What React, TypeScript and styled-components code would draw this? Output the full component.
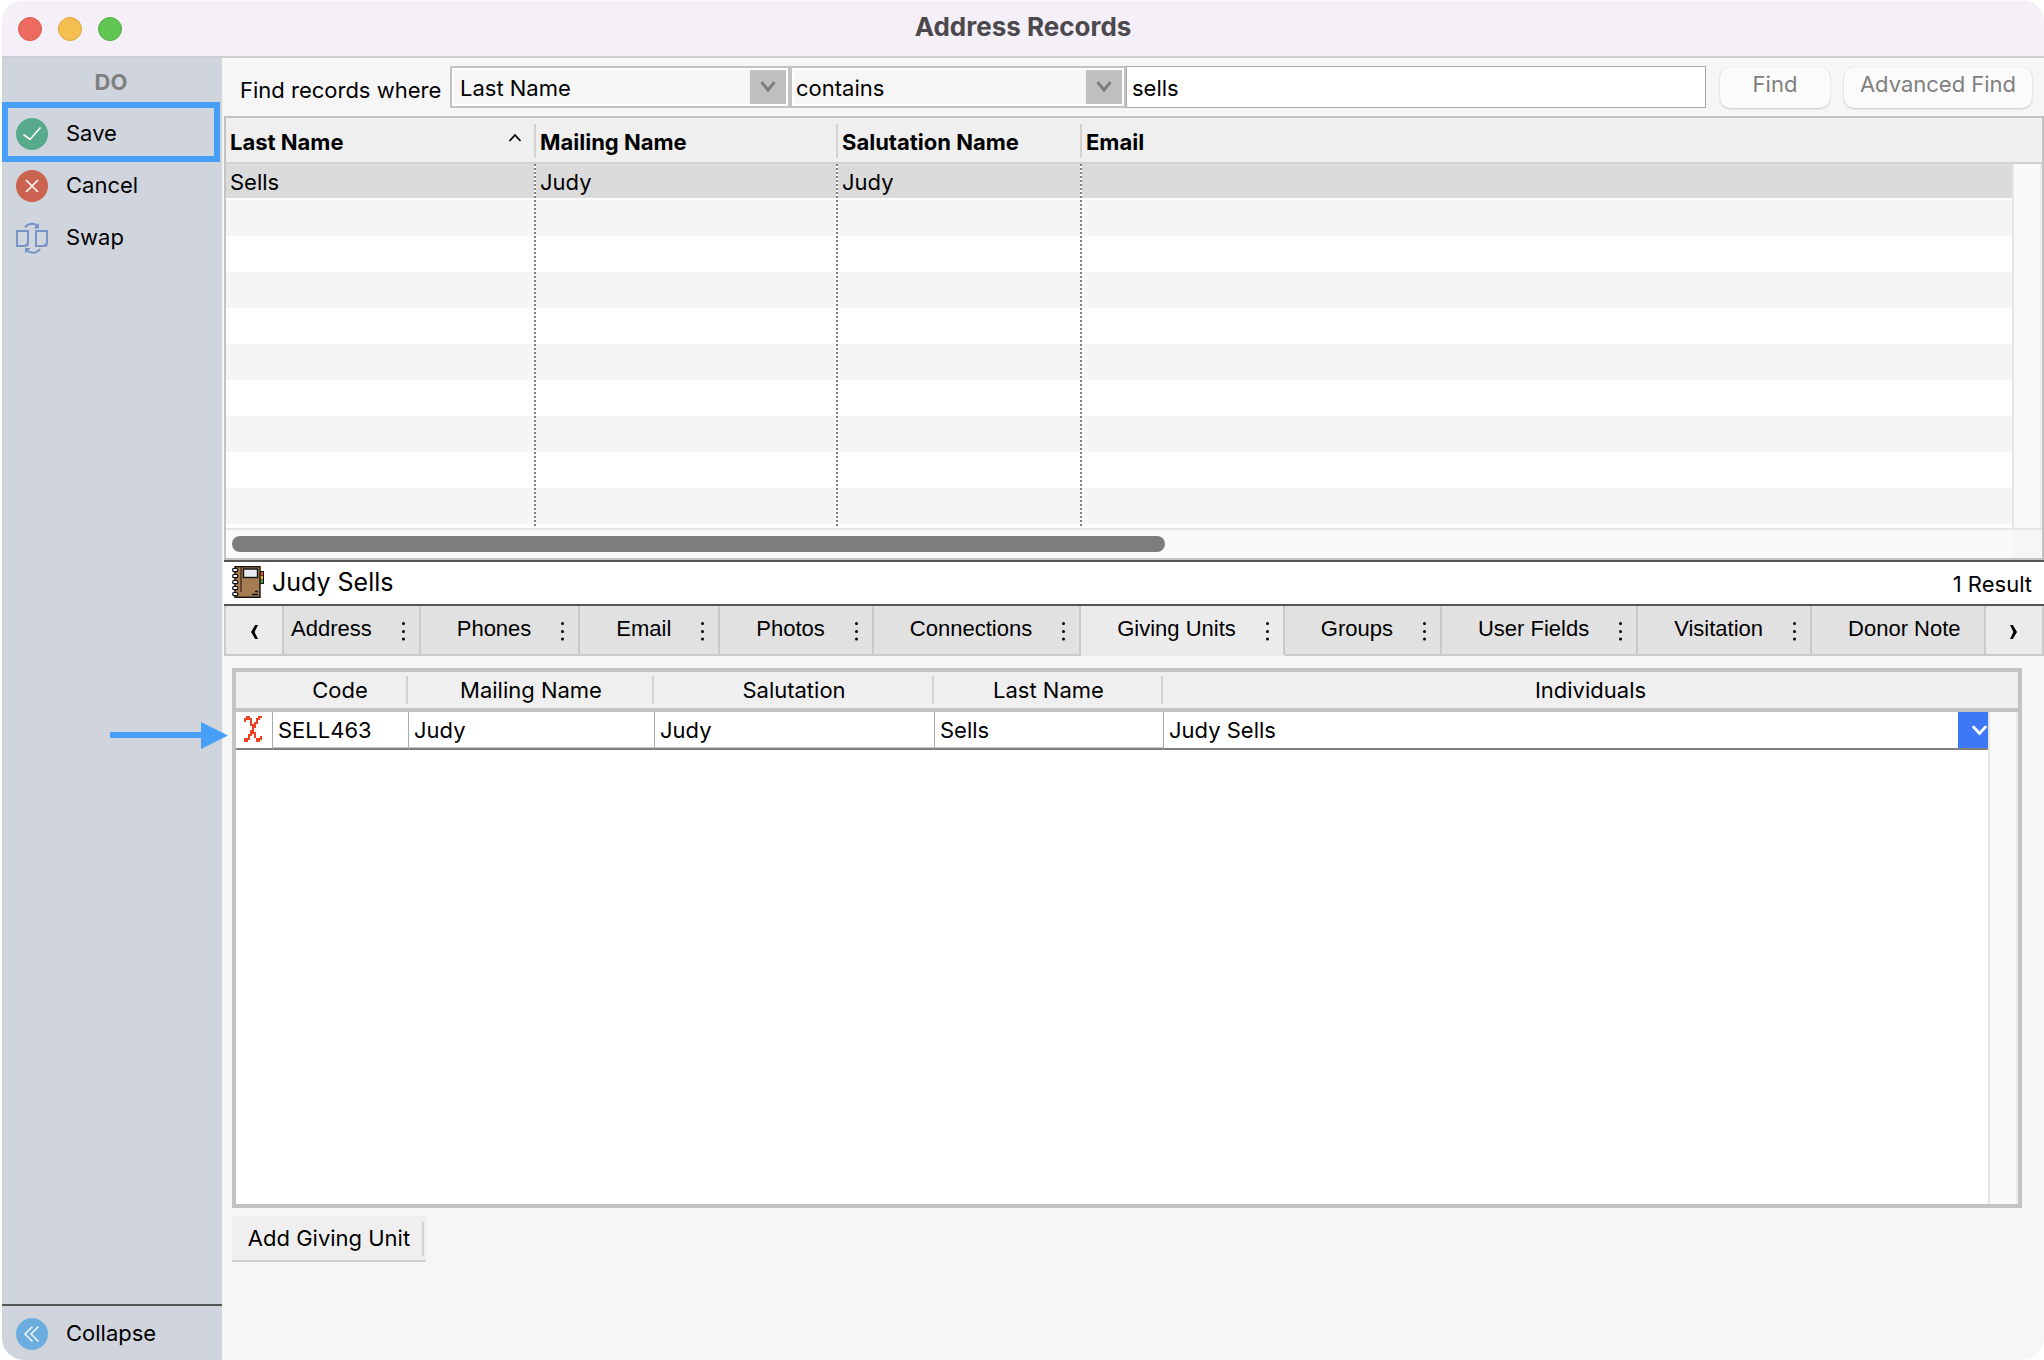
import React from "react";
import styled, { createGlobalStyle, css } from "styled-components";

const ui = `Inter, "Liberation Sans", sans-serif`;
const tabFont = `"Liberation Sans", Arial, sans-serif`;

const GlobalStyle = createGlobalStyle`
  *, *::before, *::after { box-sizing: border-box; }
  body { margin: 0; background: #ffffff; }
  body, button, input, select { font-family: ${ui}; font-size: 22px; color: #000000; }
  button, input, select { margin: 0; padding: 0; border: 0; border-radius: 0; outline: 0; background: none; }
`;

const Window = styled.div`
  position: relative;
  display: flex;
  flex-direction: column;
  min-height: 100vh;
  margin-left: 2px;
  border-radius: 22px;
  overflow: hidden;
  background: #f6f6f6;
`;

const TitleBar = styled.header`
  display: grid;
  grid-template-columns: 1fr auto 1fr;
  align-items: center;
  height: 58px;
  padding: 0 16px;
  background: #f5f0f8;
  border-top: 1px solid #faf8fb;
  border-bottom: 2px solid #d0cdd2;
`;

const Lights = styled.div`
  display: flex;
  gap: 16px;
`;

const Light = styled.button<{ $fill: string; $edge: string }>`
  width: 24px;
  height: 24px;
  border-radius: 50%;
  background: ${(p) => p.$fill};
  border: 1px solid ${(p) => p.$edge};
`;

const Title = styled.h1`
  margin: 0;
  padding-bottom: 4px;
  font-size: 26px;
  line-height: 32px;
  font-weight: 700;
  color: #4c494e;
`;

const Body = styled.div`
  flex: 1;
  display: flex;
`;

const Sidebar = styled.nav`
  flex: none;
  display: flex;
  flex-direction: column;
  width: 220px;
  background: #d0d4dd;
`;

const SideHeading = styled.h2`
  margin: 0;
  padding: 8px 2px 0 0;
  height: 44px;
  font-size: 22px;
  line-height: 32px;
  font-weight: 700;
  text-align: center;
  color: #808080;
`;

const SideItem = styled.button<{ $focused?: boolean }>`
  display: flex;
  align-items: center;
  gap: 18px;
  width: 100%;
  height: 52px;
  padding-left: 14px;
  text-align: left;
  svg { flex: none; }
  span { padding-bottom: 2px; }
  ${(p) =>
    p.$focused &&
    css`
      width: 218px;
      height: 60px;
      padding: 4px 0 0 8px;
      margin-bottom: -2px;
      border: 6px solid #489ff8;
    `}
`;

const SideFooter = styled.div`
  margin-top: auto;
  padding-top: 2px;
  border-top: 2px solid #555555;
`;

const Main = styled.main`
  flex: 1;
  min-width: 0;
  display: flex;
  flex-direction: column;
  padding-left: 2px;
`;

const FindBar = styled.form`
  display: flex;
  align-items: center;
  height: 58px;
  padding: 0 12px 0 16px;
`;

const FindLabel = styled.label`
  flex: none;
  width: 210px;
  padding-top: 6px;
  line-height: 28px;
`;

const Combo = styled.div<{ $width: number }>`
  flex: none;
  display: grid;
  grid-template-columns: 1fr 36px;
  width: ${(p) => p.$width}px;
  height: 42px;
  padding: 2px;
  background: #ffffff;
  border: 2px solid #c3c3c3;
  & > select, & > span { grid-row: 1; }
`;

const ComboSelect = styled.select<{ $inset: number }>`
  grid-column: 1 / 3;
  appearance: none;
  padding: 2px 0 0 ${(p) => p.$inset}px;
  background: #f6f6f6;
`;

const ComboArrow = styled.span`
  grid-column: 2;
  display: flex;
  align-items: center;
  justify-content: center;
  background: #c0c0c0;
  pointer-events: none;
`;

const FindInput = styled.input`
  flex: 1;
  min-width: 0;
  height: 42px;
  padding: 2px 0 0 5px;
  background: #ffffff;
  border: 1px solid #a9a9a9;
`;

const PushButton = styled.button<{ $width: number }>`
  flex: none;
  width: ${(p) => p.$width}px;
  height: 41px;
  margin-left: 14px;
  padding-bottom: 6px;
  border-radius: 10px;
  background: #fbfbfb;
  box-shadow: 0 1px 2px rgba(0, 0, 0, 0.18), 0 0 1px rgba(0, 0, 0, 0.12);
  color: #808080;
`;

const ListPanel = styled.section`
  border: 2px solid #c3c3c3;
  background: #ffffff;
`;

const ListTable = styled.table`
  width: 100%;
  table-layout: fixed;
  border-collapse: separate;
  border-spacing: 0;
`;

const ListHead = styled.th<{ $line?: boolean }>`
  height: 46px;
  padding: 4px 14px 0 4px;
  text-align: left;
  font-weight: 700;
  border-bottom: 2px solid #d2d2d2;
  background: ${(p) =>
    p.$line ? "linear-gradient(#d2d2d2, #d2d2d2) right 6px / 2px 34px no-repeat, #efefef" : "#efefef"};
  svg { float: right; margin-top: 4px; }
`;

const ListRow = styled.tr<{ $selected?: boolean; $striped?: boolean }>`
  background: ${(p) =>
    p.$selected
      ? "linear-gradient(#dbdbdb 34px, #ffffff 34px)"
      : p.$striped
        ? "linear-gradient(#f4f6f5 36px, #ffffff 36px)"
        : "#ffffff"};
  &:last-child > td { height: 40px; }
`;

const ListCell = styled.td<{ $line?: boolean }>`
  height: 36px;
  padding: 0 4px;
  line-height: 34px;
  ${(p) =>
    p.$line &&
    css`
      background: repeating-linear-gradient(#7f7f7f 0 2px, #ffffff 2px 4px) right top / 2px 100% no-repeat;
    `}
`;

const ScrollTrack = styled.td`
  background: #fafafa;
  border-left: 2px solid #e6e6e6;
  border-right: 2px solid #ececec;
`;

const HorizontalScroll = styled.div`
  height: 30px;
  padding: 6px 30px 0 6px;
  border-top: 2px solid #e6e6e6;
  background: linear-gradient(#f6f6f6, #f6f6f6) right / 30px 100% no-repeat, #fafafa;
`;

const ScrollThumb = styled.div`
  width: 52.4%;
  height: 16px;
  border-radius: 8px;
  background: #7d7d7d;
`;

const RecordBar = styled.div`
  display: flex;
  align-items: center;
  gap: 8px;
  height: 46px;
  padding: 0 12px 2px 8px;
  background: #ffffff;
  border-top: 2px solid #555555;
  border-bottom: 2px solid #555555;
`;

const RecordName = styled.h2`
  margin: 0;
  font-size: 25px;
  line-height: 32px;
  font-weight: 400;
`;

const ResultCount = styled.output`
  margin-left: auto;
  padding-top: 4px;
`;

const TabBar = styled.div`
  display: flex;
  height: 50px;
  border-left: 2px solid #cacaca;
  border-right: 2px solid #cacaca;
`;

const TabArrow = styled.button`
  flex: none;
  width: 58px;
  padding-top: 4px;
  background: #ebebeb;
  border-right: 2px solid #cacaca;
  border-bottom: 2px solid #cacaca;
  &:last-child { width: 56px; border-right: 0; }
`;

const Tab = styled.button<{ $active?: boolean; $clipped?: boolean; $last?: boolean }>`
  flex: none;
  display: flex;
  align-items: center;
  justify-content: space-between;
  gap: 30px;
  padding: 0 14px 0 ${(p) => (p.$clipped ? 7 : 36)}px;
  font-family: ${tabFont};
  font-size: 22px;
  white-space: nowrap;
  background: ${(p) => (p.$active ? "#ebebeb" : "#e1e1e1")};
  border-right: 2px solid #cacaca;
  border-bottom: 2px solid ${(p) => (p.$active ? "#ebebeb" : "#cacaca")};
  span { padding-bottom: 2px; }
  ${(p) => p.$last && css`flex: 1; min-width: 0; overflow: hidden;`}
`;

const GridFrame = styled.section`
  flex: 1;
  margin: 12px 22px 0 8px;
  border: 4px solid #c3c3c3;
  background:
    linear-gradient(#ececec, #ececec) right / 2px 100% no-repeat,
    linear-gradient(to right, #e6e6e6 2px, #fafafa 2px) right / 30px 100% no-repeat,
    #ffffff;
`;

const GridTable = styled(ListTable)``;

const GridHead = styled.th<{ $line?: boolean }>`
  height: 40px;
  padding: 0;
  line-height: 32px;
  font-weight: 400;
  border-bottom: 4px solid #c3c3c3;
  background: ${(p) =>
    p.$line ? "linear-gradient(#d2d2d2, #d2d2d2) right 4px / 2px 28px no-repeat, #efefef" : "#efefef"};
`;

const GridCell = styled.td<{ $first?: boolean }>`
  height: 38px;
  padding: 0;
  background: #ffffff;
  border-left: ${(p) => (p.$first ? 0 : 1)}px solid #a9a9a9;
  border-bottom: 2px solid #7f7f7f;
`;

const CellInput = styled.input`
  display: block;
  width: 100%;
  height: 36px;
  padding-left: 5px;
  border-bottom: 1px solid #cccccc;
`;

const DeleteButton = styled.button`
  display: block;
  height: 36px;
  padding: 2px 0 0 8px;
`;

const CellCombo = styled.div`
  display: grid;
  grid-template-columns: 1fr 30px;
  height: 36px;
  & > select, & > span { grid-row: 1; }
`;

const CellSelect = styled.select`
  grid-column: 1 / 3;
  appearance: none;
  padding-left: 5px;
`;

const CellArrow = styled.span`
  grid-column: 2;
  display: flex;
  align-items: center;
  justify-content: flex-end;
  background: #3e78f6;
  pointer-events: none;
`;

const Footer = styled.footer`
  height: 152px;
  padding: 8px;
`;

const AddButton = styled.button`
  width: 194px;
  height: 46px;
  border-bottom: 2px solid #d0d0d0;
  background: linear-gradient(#d2d2d2, #d2d2d2) 190px 6px / 2px 34px no-repeat, #efefef;
`;

const PointerArrow = styled.svg`
  position: absolute;
  left: 108px;
  top: 722px;
`;

const CheckIcon = () => (
  <svg width="32" height="32" viewBox="0 0 32 32" fill="none" aria-hidden="true">
    <circle cx="16" cy="16" r="16" fill="#57ab8c" />
    <path d="M7.5 16.5 14 21.5 24.5 9.5" stroke="#fff" strokeWidth="1.6" />
  </svg>
);

const CancelIcon = () => (
  <svg width="32" height="32" viewBox="0 0 32 32" fill="none" aria-hidden="true">
    <circle cx="16" cy="16" r="16" fill="#cb6350" />
    <path d="M10 10 22 22M22 10 10 22" stroke="#fff" strokeWidth="1.6" />
  </svg>
);

const SwapIcon = () => (
  <svg width="32" height="32" viewBox="0 0 32 32" fill="none" stroke="#7794c5" strokeWidth="2" aria-hidden="true">
    <path d="M1 9h11v12l-3 3H1z" />
    <path d="M20 9h11v12l-3 3h-8z" />
    <path d="M12 21v3H9zM31 21v3h-3z" fill="#7794c5" strokeWidth="1" />
    <path d="M9 5.5C12 1 18 .8 21.5 4" />
    <path d="M23 1v5.5h-5.5z" fill="#7794c5" stroke="none" />
    <path d="M24 27c-3 4.5-9 4.7-13 1.5" />
    <path d="M9 31.5V26h5.5z" fill="#7794c5" stroke="none" />
  </svg>
);

const CollapseIcon = () => (
  <svg width="32" height="32" viewBox="0 0 32 32" fill="none" aria-hidden="true">
    <circle cx="16" cy="16" r="16" fill="#6caddf" />
    <path d="M16.5 8.5 9 16l7.5 7.5M22.5 8.5 15 16l7.5 7.5" stroke="#fff" strokeWidth="1.4" />
  </svg>
);

const ComboChevron = () => (
  <svg width="16" height="16" viewBox="0 0 16 16" fill="none" aria-hidden="true">
    <path d="M1.5 3 8 11 14.5 3" stroke="#7f7f7f" strokeWidth="3" />
  </svg>
);

const CellChevron = () => (
  <svg width="18" height="14" viewBox="0 0 18 14" fill="none" aria-hidden="true">
    <path d="M3.5 4 9.500 10.500 15.500 4" stroke="#fff" strokeWidth="2.8" strokeLinecap="round" />
  </svg>
);

const SortIcon = () => (
  <svg width="14" height="10" viewBox="0 0 14 10" fill="none" aria-hidden="true">
    <path d="M1.5 8 7 2l5.5 6" stroke="#000" strokeWidth="1.8" />
  </svg>
);

const TabChevron = ({ flip }: { flip?: boolean }) => (
  <svg width="8" height="16" viewBox="0 0 8 16" aria-hidden="true">
    <path d={flip ? "M0 1h2.800L7 8l-4.200 7H0l3.400-7z" : "M8 1H5.200L1 8l4.200 7H8L4.600 8z"} fill="#000" />
  </svg>
);

const Dots = () => (
  <svg width="3" height="22" viewBox="0 0 3 22" aria-hidden="true">
    <circle cx="1.5" cy="4.5" r="1.5" />
    <circle cx="1.5" cy="12.5" r="1.5" />
    <circle cx="1.5" cy="20" r="1.5" />
  </svg>
);

const BookIcon = () => (
  <svg width="32" height="32" viewBox="0 0 32 32" aria-hidden="true">
    <rect x="27" y="5" width="5" height="13" fill="#111" />
    <rect x="28" y="6" width="3" height="3.5" fill="#e4572e" />
    <rect x="28" y="10" width="3" height="3.5" fill="#f0b429" />
    <rect x="28" y="14" width="3" height="3.2" fill="#3f9b45" />
    <rect x="3" y="0.7" width="25" height="30.6" fill="#a67c52" stroke="#111" strokeWidth="1.4" />
    <path d="M9 1v25" stroke="#4a321c" strokeWidth="1.5" />
    <rect x="11.5" y="3" width="14" height="8.5" fill="#e6eaf0" stroke="#111" strokeWidth="1.4" />
    <path d="M23 25.500h3M20 28.500h6" stroke="#111" strokeWidth="1.4" />
    {[2.5, 8.5, 14.5, 20.5, 26.5].map((y) => (
      <rect key={y} x="0.7" y={y} width="5" height="3.2" rx="1" fill="#eef2f6" stroke="#111" strokeWidth="1.2" />
    ))}
  </svg>
);

const crossPixels = [
  [1, 2, 7, 8],
  [0, 1, 2, 3, 6, 7],
  [0, 3, 6],
  [3, 5, 6],
  [3, 4, 5],
  [4, 5],
  [4],
  [3, 4],
  [3, 4, 5],
  [2, 3, 5],
  [2, 5, 8],
  [0, 1, 2, 6, 7, 8],
  [0, 1, 6, 7],
];

const CrossIcon = () => (
  <svg width="18" height="26" viewBox="0 0 9 13" shapeRendering="crispEdges" fill="#ee4023" aria-hidden="true">
    {crossPixels.flatMap((cols, y) => cols.map((x) => <rect key={`${x}-${y}`} x={x} y={y} width="1" height="1" />))}
  </svg>
);

const tabs = [
  "Address",
  "Phones",
  "Email",
  "Photos",
  "Connections",
  "Giving Units",
  "Groups",
  "User Fields",
  "Visitation",
  "Donor Note",
];

const rows: string[][] = [["Sells", "Judy", "Judy", ""], ...Array.from({ length: 9 }, () => ["", "", "", ""])];

export default function App() {
  return (
    <>
      <GlobalStyle />
      <Window>
        <TitleBar>
          <Lights>
            <Light aria-label="Close" $fill="#ec6a5e" $edge="#d95a4e" />
            <Light aria-label="Minimize" $fill="#f4bf4f" $edge="#dca643" />
            <Light aria-label="Zoom" $fill="#61c554" $edge="#4fae42" />
          </Lights>
          <Title>Address Records</Title>
        </TitleBar>
        <Body>
          <Sidebar>
            <SideHeading>DO</SideHeading>
            <SideItem $focused>
              <CheckIcon />
              <span>Save</span>
            </SideItem>
            <SideItem>
              <CancelIcon />
              <span>Cancel</span>
            </SideItem>
            <SideItem>
              <SwapIcon />
              <span>Swap</span>
            </SideItem>
            <SideFooter>
              <SideItem>
                <CollapseIcon />
                <span>Collapse</span>
              </SideItem>
            </SideFooter>
          </Sidebar>
          <Main>
            <FindBar onSubmit={(e) => e.preventDefault()}>
              <FindLabel htmlFor="field">Find records where</FindLabel>
              <Combo $width={340}>
                <ComboSelect id="field" $inset={6}>
                  <option>Last Name</option>
                </ComboSelect>
                <ComboArrow>
                  <ComboChevron />
                </ComboArrow>
              </Combo>
              <Combo $width={336}>
                <ComboSelect aria-label="Condition" $inset={2}>
                  <option>contains</option>
                </ComboSelect>
                <ComboArrow>
                  <ComboChevron />
                </ComboArrow>
              </Combo>
              <FindInput aria-label="Search value" defaultValue="sells" />
              <PushButton type="submit" $width={110}>
                Find
              </PushButton>
              <PushButton type="button" $width={188}>
                Advanced Find
              </PushButton>
            </FindBar>
            <ListPanel>
              <ListTable>
                <colgroup>
                  <col style={{ width: 310 }} />
                  <col style={{ width: 302 }} />
                  <col style={{ width: 244 }} />
                  <col />
                  <col style={{ width: 30 }} />
                </colgroup>
                <thead>
                  <tr>
                    <ListHead $line>
                      Last Name
                      <SortIcon />
                    </ListHead>
                    <ListHead $line>Mailing Name</ListHead>
                    <ListHead $line>Salutation Name</ListHead>
                    <ListHead colSpan={2}>Email</ListHead>
                  </tr>
                </thead>
                <tbody>
                  {rows.map((row, i) => (
                    <ListRow key={i} $selected={i === 0} $striped={i % 2 === 1}>
                      {row.map((text, j) => (
                        <ListCell key={j} $line={j < 3}>
                          {text}
                        </ListCell>
                      ))}
                      {i === 0 && <ScrollTrack rowSpan={10} />}
                    </ListRow>
                  ))}
                </tbody>
              </ListTable>
              <HorizontalScroll>
                <ScrollThumb />
              </HorizontalScroll>
            </ListPanel>
            <RecordBar>
              <BookIcon />
              <RecordName>Judy Sells</RecordName>
              <ResultCount>1 Result</ResultCount>
            </RecordBar>
            <TabBar>
              <TabArrow aria-label="Previous tabs">
                <TabChevron />
              </TabArrow>
              {tabs.map((name, i) => (
                <Tab key={name} $active={name === "Giving Units"} $clipped={i === 0} $last={i === tabs.length - 1}>
                  <span>{name}</span>
                  {i < tabs.length - 1 && <Dots />}
                </Tab>
              ))}
              <TabArrow aria-label="Next tabs">
                <TabChevron flip />
              </TabArrow>
            </TabBar>
            <GridFrame>
              <GridTable>
                <colgroup>
                  <col style={{ width: 36 }} />
                  <col style={{ width: 136 }} />
                  <col style={{ width: 246 }} />
                  <col style={{ width: 280 }} />
                  <col style={{ width: 229 }} />
                  <col />
                  <col style={{ width: 30 }} />
                </colgroup>
                <thead>
                  <tr>
                    <GridHead />
                    <GridHead $line>Code</GridHead>
                    <GridHead $line>Mailing Name</GridHead>
                    <GridHead $line>Salutation</GridHead>
                    <GridHead $line>Last Name</GridHead>
                    <GridHead colSpan={2}>Individuals</GridHead>
                  </tr>
                </thead>
                <tbody>
                  <tr>
                    <GridCell $first>
                      <DeleteButton aria-label="Remove giving unit">
                        <CrossIcon />
                      </DeleteButton>
                    </GridCell>
                    <GridCell>
                      <CellInput aria-label="Code" defaultValue="SELL463" />
                    </GridCell>
                    <GridCell>
                      <CellInput aria-label="Mailing Name" defaultValue="Judy" />
                    </GridCell>
                    <GridCell>
                      <CellInput aria-label="Salutation" defaultValue="Judy" />
                    </GridCell>
                    <GridCell>
                      <CellInput aria-label="Last Name" defaultValue="Sells" />
                    </GridCell>
                    <GridCell>
                      <CellCombo>
                        <CellSelect aria-label="Individuals">
                          <option>Judy Sells</option>
                        </CellSelect>
                        <CellArrow>
                          <CellChevron />
                        </CellArrow>
                      </CellCombo>
                    </GridCell>
                  </tr>
                </tbody>
              </GridTable>
            </GridFrame>
            <Footer>
              <AddButton>Add Giving Unit</AddButton>
            </Footer>
          </Main>
        </Body>
        <PointerArrow width="120" height="28" viewBox="0 0 120 28" fill="#489ff8" aria-hidden="true">
          <path d="M0 10h91V0l27 13.500L91 27V16H0z" />
        </PointerArrow>
      </Window>
    </>
  );
}
